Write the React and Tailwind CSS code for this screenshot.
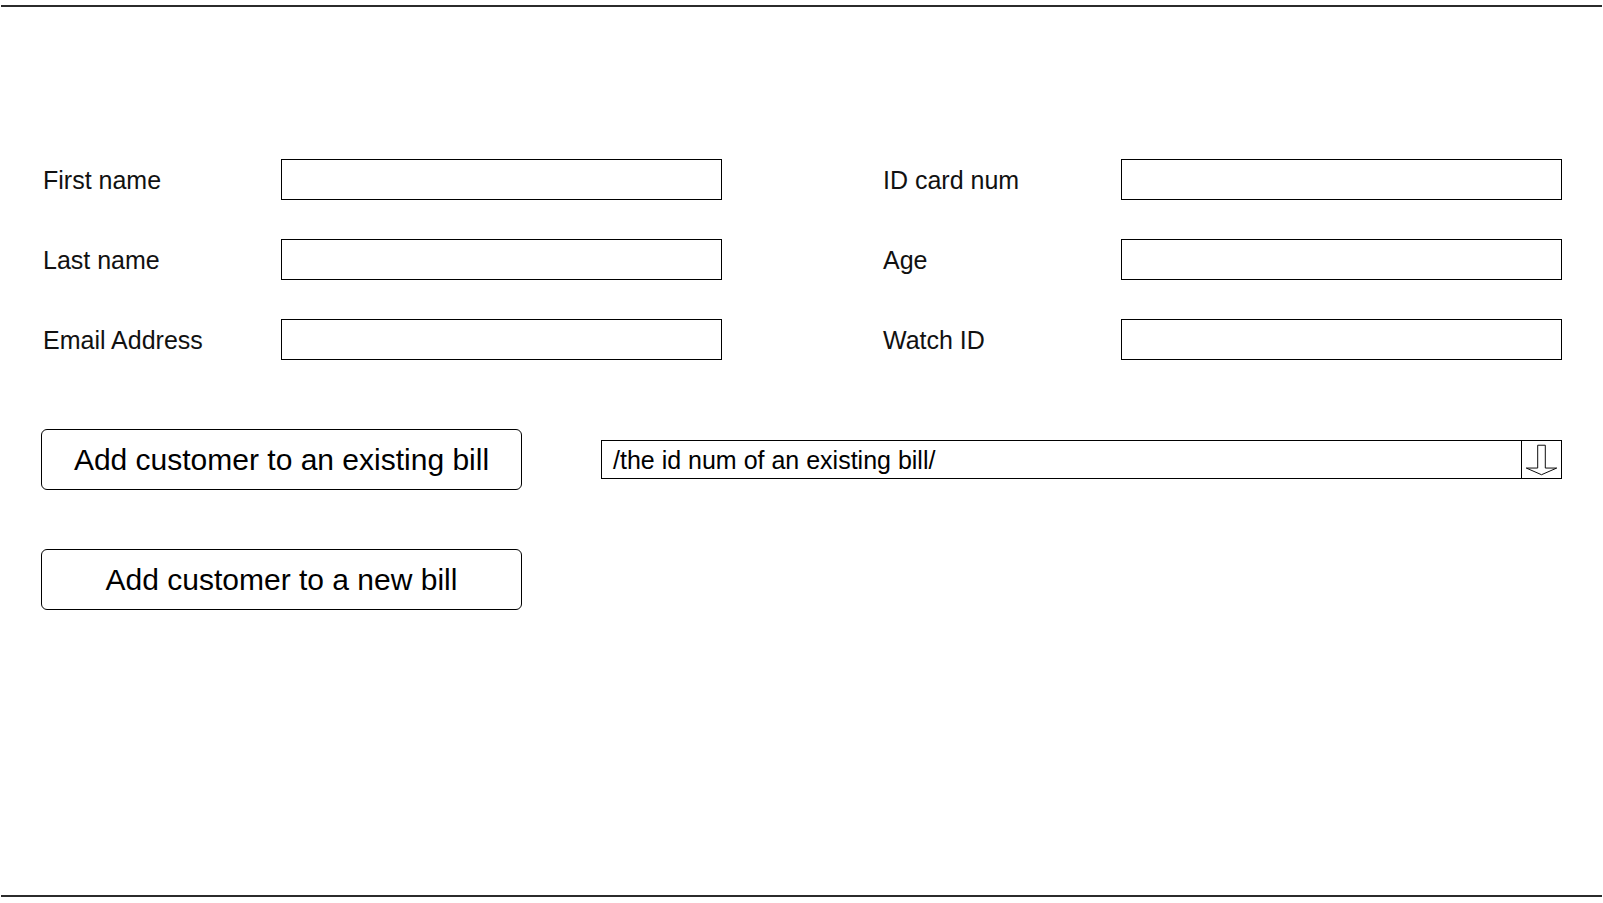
import React from "react";

const leftFields = ["First name", "Last name", "Email Address"];
const rightFields = ["ID card num", "Age", "Watch ID"];

function Field({ label }) {
  return (
    <div className="flex items-center">
      <span className="w-[238px] pt-[2px] text-[25px] leading-none text-[#111]">{label}</span>
      <div className="h-[41px] w-[441px] border border-black bg-white" />
    </div>
  );
}

function ArrowDown() {
  return (
    <svg width="41" height="37" viewBox="0 0 41 37" className="block">
      <polygon
        points="16.5,3.5 24.5,3.5 24.5,27.5 36.5,27.5 20.5,34.5 4.5,27.5 16.5,27.5"
        fill="white"
        stroke="#000"
        strokeWidth="1"
      />
    </svg>
  );
}

export default function App() {
  return (
    <div className="flex h-[903px] w-full flex-col bg-white font-['Liberation_Sans',Arial,sans-serif] text-black">
      {/* top rule */}
      <div className="mx-[1px] mt-[5px] h-[2px] bg-[#2b2b2b]" />

      <div className="flex-1 pl-[41px] pt-[152px]">
        {/* customer fields */}
        <div className="flex gap-[161px] pl-[2px]">
          <div className="flex flex-col gap-[39px]">
            {leftFields.map((f) => (
              <Field key={f} label={f} />
            ))}
          </div>
          <div className="flex flex-col gap-[39px]">
            {rightFields.map((f) => (
              <Field key={f} label={f} />
            ))}
          </div>
        </div>

        {/* actions */}
        <div className="mt-[69px] flex items-center gap-[79px]">
          <button className="flex h-[61px] w-[481px] items-center justify-center rounded-[6px] border border-black bg-white text-[30px] leading-none">
            Add customer to an existing bill
          </button>
          <div className="flex h-[39px] w-[961px] items-stretch border border-black bg-white">
            <span className="flex flex-1 items-center pl-[11px] pt-[2px] text-[25px] leading-none">
              /the id num of an existing bill/
            </span>
            <div className="flex w-[40px] items-center justify-center border-l border-black">
              <ArrowDown />
            </div>
          </div>
        </div>

        <button className="mt-[59px] flex h-[61px] w-[481px] items-center justify-center rounded-[6px] border border-black bg-white text-[30px] leading-none">
          Add customer to a new bill
        </button>
      </div>

      {/* bottom rule */}
      <div className="mx-[1px] mb-[6px] h-[2px] bg-[#2b2b2b]" />
    </div>
  );
}
